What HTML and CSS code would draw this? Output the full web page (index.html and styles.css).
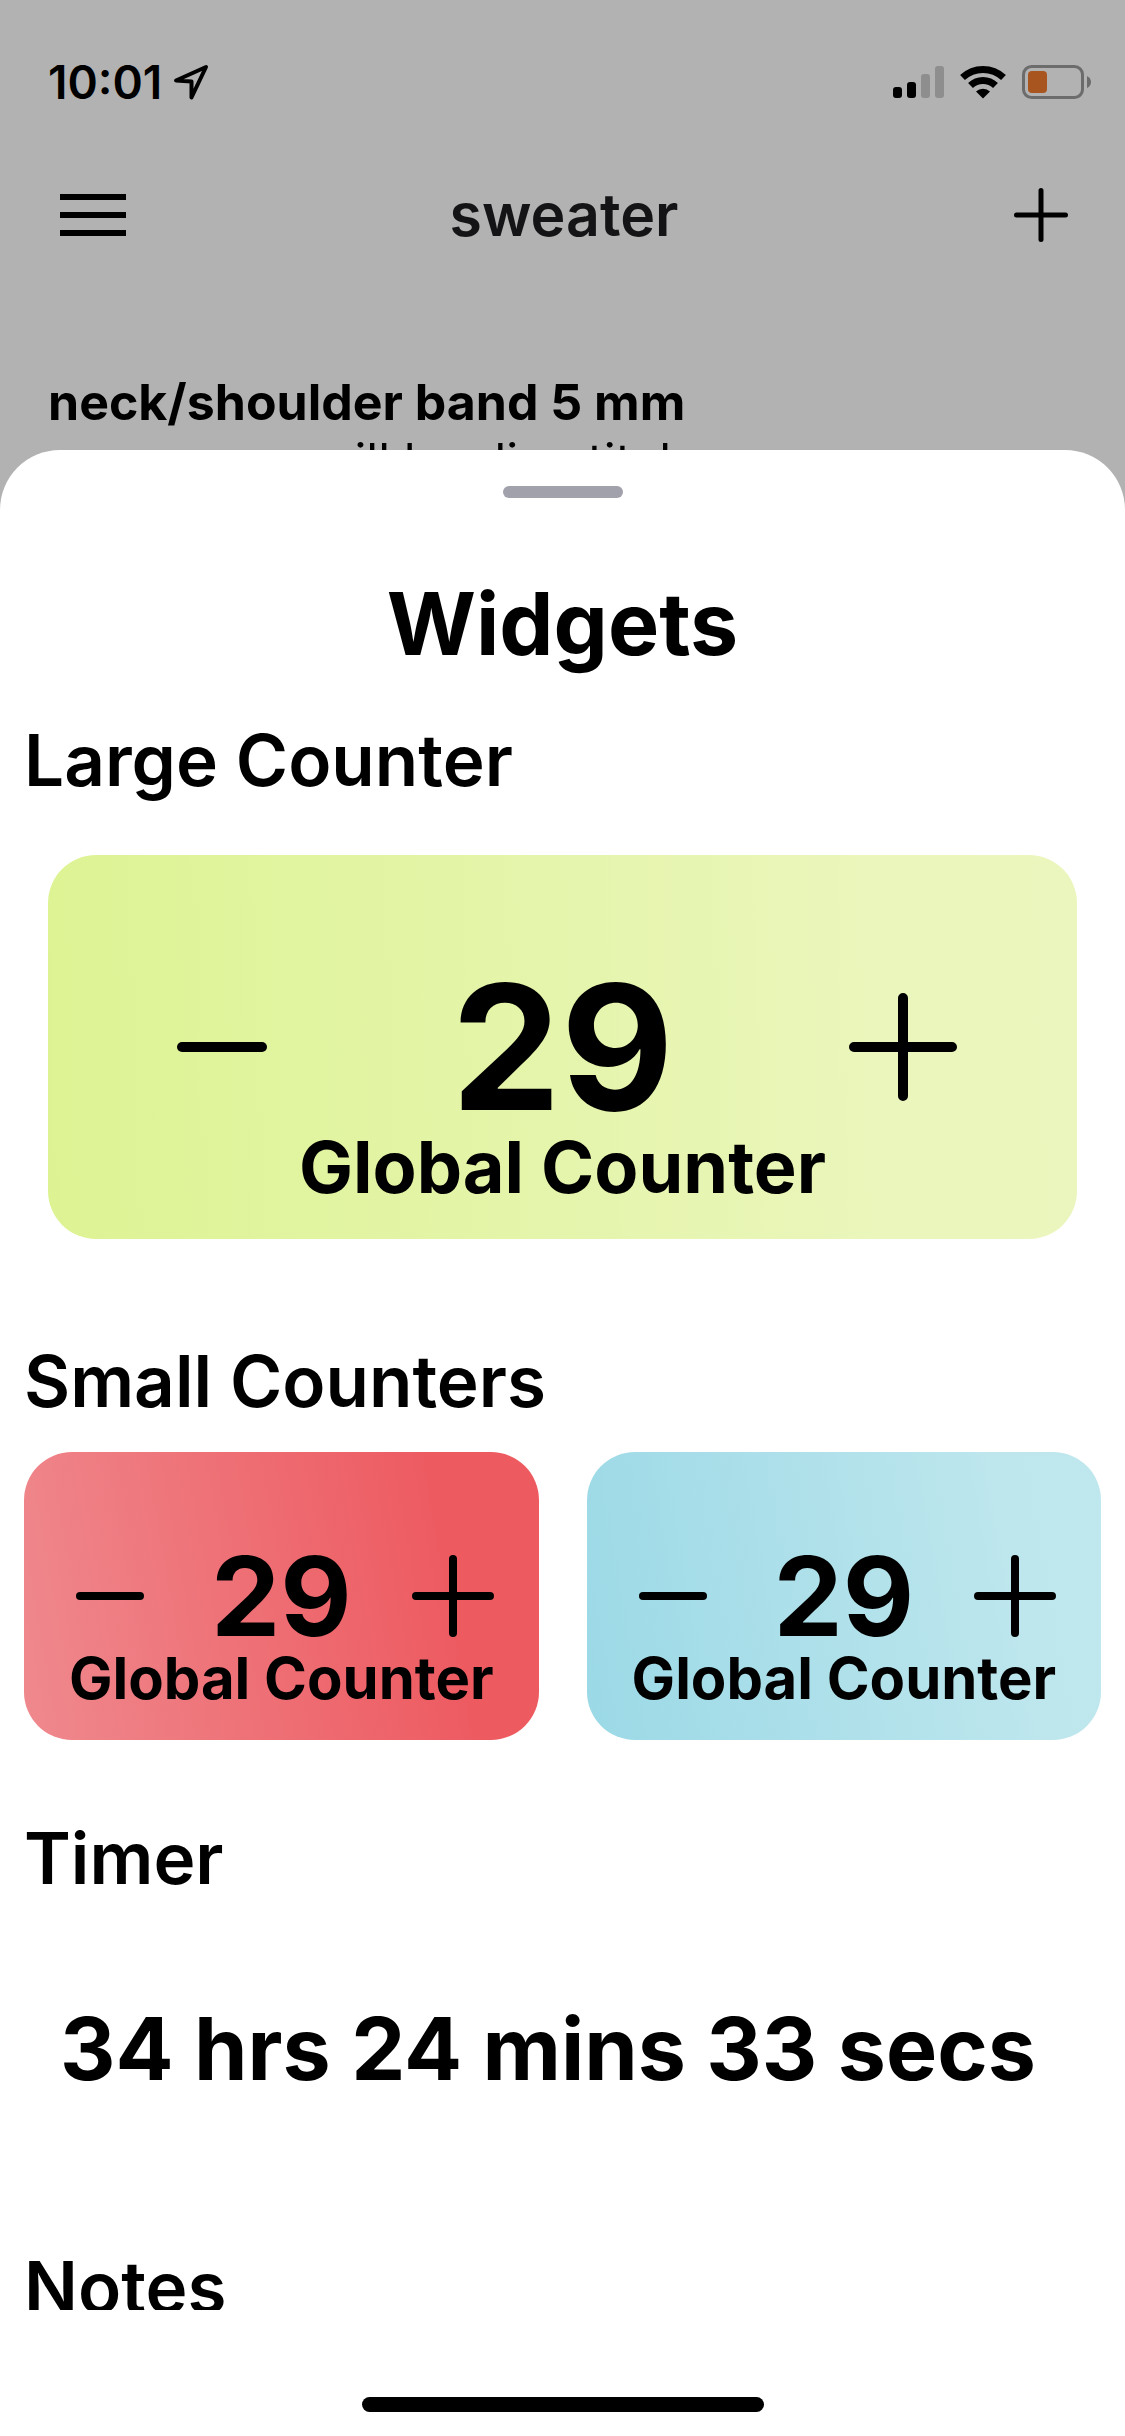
FILE: index.html
```html
<!DOCTYPE html>
<html lang="en">
<head>
<meta charset="utf-8">
<meta name="viewport" content="width=device-width, initial-scale=1">
<title>sweater</title>
<link rel="stylesheet" href="styles.css">
</head>
<body>
<div class="backdrop">
  <div class="status">
    <div class="status-side status-clock">
      <span class="time">10:01</span>
      <svg width="38" height="38" viewBox="0 0 38 38" aria-hidden="true"><path d="M4 17.500L34 4L19.500 34.500V18.500L4 17.500Z" fill="none" stroke="#000" stroke-width="4" stroke-linejoin="round"/></svg>
    </div>
    <div class="status-side">
      <svg width="51" height="34" viewBox="0 0 51 34" aria-hidden="true"><g fill="#000"><rect x="0" y="22" width="9" height="11" rx="3"/><rect x="14" y="17" width="9" height="16" rx="3"/></g><g fill="#8e8e8e"><rect x="28" y="9" width="9" height="24" rx="3"/><rect x="42" y="1" width="9" height="32" rx="3"/></g></svg>
      <svg width="46" height="34" viewBox="0 0 46 34" aria-hidden="true"><g fill="none" stroke="#000" stroke-width="7"><path d="M2.500 12.500A30 30 0 0 1 43.500 12.500"/><path d="M10.500 20.500A18 18 0 0 1 35.500 20.500"/></g><path d="M16 26.500A10 10 0 0 1 30 26.500L23 33.500Z"/></svg>
      <svg width="70" height="34" viewBox="0 0 70 34" aria-hidden="true"><rect x="1.500" y="1.500" width="59" height="31" rx="8" fill="none" stroke="#6c6c6c" stroke-width="3"/><rect x="6" y="6" width="19" height="22" rx="4" fill="#a8551f"/><path d="M65 11Q69 13 69 17T65 23Z" fill="#6c6c6c"/></svg>
    </div>
  </div>
  <header class="topbar">
    <button class="icon-button" type="button" aria-label="Menu"><svg width="66" height="42" viewBox="0 0 66 42"><path d="M0 3H66M0 21H66M0 39H66" stroke="#000" stroke-width="6"/></svg></button>
    <h1 class="title">sweater</h1>
    <button class="icon-button" type="button" aria-label="Add"><svg width="54" height="54" viewBox="0 0 54 54"><path d="M2.500 27H51.500M27 2.500V51.500" stroke="#000" stroke-width="5" stroke-linecap="round"/></svg></button>
  </header>
  <div class="pattern">
    <h2 class="pattern-title">neck/shoulder band 5 mm</h2>
    <p class="pattern-text">some rows will be dip stitch</p>
  </div>
</div>
<main class="sheet">
  <div class="handle"></div>
  <div class="scroll">
    <h2 class="sheet-title">Widgets</h2>
    <section class="section-large">
      <h3 class="heading">Large Counter</h3>
      <div class="counter counter-large lime">
        <div class="counter-row">
          <button class="icon-button" type="button" aria-label="Decrease"><svg width="90" height="10" viewBox="0 0 90 10"><path d="M5 5H85" stroke="#000" stroke-width="10" stroke-linecap="round"/></svg></button>
          <output class="value">29</output>
          <button class="icon-button" type="button" aria-label="Increase"><svg width="108" height="108" viewBox="0 0 108 108"><path d="M5 54H103M54 5V103" stroke="#000" stroke-width="10" stroke-linecap="round"/></svg></button>
        </div>
        <div class="label">Global Counter</div>
      </div>
    </section>
    <section class="section-small">
      <h3 class="heading">Small Counters</h3>
      <div class="counter-grid">
        <div class="counter counter-small red">
          <div class="counter-row">
            <button class="icon-button" type="button" aria-label="Decrease"><svg width="68" height="8" viewBox="0 0 68 8"><path d="M4 4H64" stroke="#000" stroke-width="8" stroke-linecap="round"/></svg></button>
            <output class="value">29</output>
            <button class="icon-button" type="button" aria-label="Increase"><svg width="82" height="82" viewBox="0 0 82 82"><path d="M4 41H78M41 4V78" stroke="#000" stroke-width="8" stroke-linecap="round"/></svg></button>
          </div>
          <div class="label">Global Counter</div>
        </div>
        <div class="counter counter-small blue">
          <div class="counter-row">
            <button class="icon-button" type="button" aria-label="Decrease"><svg width="68" height="8" viewBox="0 0 68 8"><path d="M4 4H64" stroke="#000" stroke-width="8" stroke-linecap="round"/></svg></button>
            <output class="value">29</output>
            <button class="icon-button" type="button" aria-label="Increase"><svg width="82" height="82" viewBox="0 0 82 82"><path d="M4 41H78M41 4V78" stroke="#000" stroke-width="8" stroke-linecap="round"/></svg></button>
          </div>
          <div class="label">Global Counter</div>
        </div>
      </div>
    </section>
    <section class="section-timer">
      <h3 class="heading">Timer</h3>
      <p class="timer">34 hrs 24 mins 33 secs</p>
    </section>
    <section class="section-notes">
      <h3 class="heading">Notes</h3>
    </section>
  </div>
  <div class="home-area"><div class="home-bar"></div></div>
</main>
</body>
</html>
```
FILE: styles.css
```css
* { box-sizing: border-box; margin: 0; padding: 0; }

body {
  height: 100vh;
  display: flex;
  flex-direction: column;
  overflow: hidden;
  background: #b2b2b2;
  color: #000;
  font-family: Inter, "Liberation Sans", sans-serif;
}

svg { display: block; }

.icon-button { border: 0; background: none; cursor: pointer; }

/* Dimmed project page behind the sheet */
.backdrop { flex: none; height: 450px; overflow: hidden; }

.status {
  display: flex;
  justify-content: space-between;
  align-items: center;
  height: 132px;
  padding: 32px 33px 0 48px;
}

.status-side { display: flex; align-items: center; gap: 16px; }
.status-clock { gap: 10px; }
.time { font-size: 46px; line-height: 56px; font-weight: 600; }

.topbar {
  display: grid;
  grid-template-columns: 1fr auto 1fr;
  align-items: center;
  height: 166px;
  padding: 0 57px 0 60px;
}

.topbar .icon-button:last-child { justify-self: end; }
.topbar .icon-button:first-child { justify-self: start; }
.title { font-size: 59px; line-height: 72px; font-weight: 600; color: #141416; }

.pattern { padding: 74px 48px 0; }
.pattern-title { font-size: 50px; line-height: 60px; font-weight: 700; }
.pattern-text { font-size: 49px; line-height: 60px; white-space: nowrap; }

/* Sheet */
.sheet {
  flex: 1;
  min-height: 0;
  display: flex;
  flex-direction: column;
  border-radius: 60px 60px 0 0;
  background: #fff;
}

.handle {
  flex: none;
  width: 120px;
  height: 12px;
  margin: 36px auto 0;
  border-radius: 6px;
  background: #a1a1ab;
}

.scroll { flex: 1; min-height: 0; overflow: hidden; padding: 72px 24px 0; }
.home-area { flex: none; height: 126px; padding-top: 87px; }
.home-bar { width: 402px; height: 15px; margin: 0 auto; border-radius: 8px; background: #000; }

.sheet-title { font-size: 86px; line-height: 108px; font-weight: 700; text-align: center; }
.heading { font-size: 71px; line-height: 93px; font-weight: 600; }

.section-large { padding-top: 36px; }
.section-small { padding-top: 96px; }
.section-timer { padding-top: 72px; }
.section-notes { padding-top: 48px; }

.counter { border-radius: 48px; }
.counter-row { display: grid; align-items: center; justify-items: center; }
.label { font-weight: 700; text-align: center; white-space: nowrap; }
.value { font-weight: 700; }

.counter-large { margin: 48px 24px 0; padding: 102px 120px 42px; }
.counter-large .counter-row { grid-template-columns: 108px 1fr 108px; }
.counter-large .value { font-size: 174px; line-height: 180px; }
.counter-large .label { font-size: 72px; line-height: 60px; }

.counter-grid { display: grid; grid-template-columns: 1fr 1fr; gap: 48px; padding-top: 24px; }
.counter-small { padding: 86px 45px 38px; }
.counter-small .counter-row { grid-template-columns: 82px 1fr 82px; }
.counter-small .value { font-size: 110px; line-height: 116px; }
.counter-small .label { font-size: 58px; line-height: 48px; }

.lime { background: linear-gradient(88deg, #ddf393, #eaf6bb 80%, #ebf6be); }
.red { background: linear-gradient(80deg, #ef898e, #ed5b61 80%); }
.blue { background: linear-gradient(80deg, #9bd9e6, #bde6ed 80%, #bfe7ee); }

.timer { padding: 90px 36px; font-size: 86px; line-height: 108px; font-weight: 700; }
```
